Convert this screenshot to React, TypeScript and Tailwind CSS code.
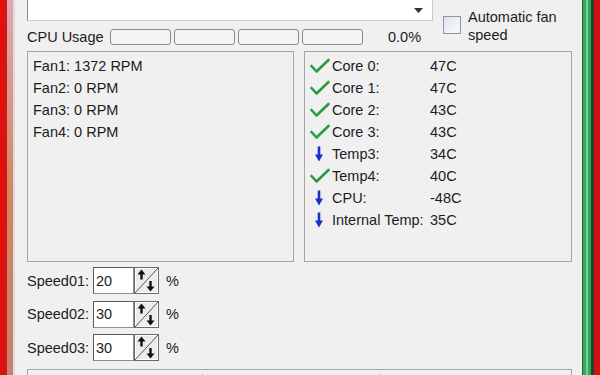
import React from "react";

const font = { fontFamily: '"Liberation Sans", Arial, sans-serif' };

function Check() {
  return (
    <svg width="20" height="16" viewBox="0 0 20 16" className="shrink-0">
      <path d="M1.5 8 L6.5 13.5 L18.5 2" stroke="#2b9a45" strokeWidth="2.6" fill="none" strokeLinecap="round" strokeLinejoin="round" />
    </svg>
  );
}

function Down() {
  return (
    <svg width="20" height="16" viewBox="0 0 20 16" className="shrink-0">
      <path d="M9 0.5 V11" stroke="#1830c8" strokeWidth="2.6" />
      <path d="M5 8.5 L9 15.5 L13 8.5 Z" fill="#1830c8" />
    </svg>
  );
}

function Spinner() {
  return (
    <svg width="25" height="27" viewBox="0 0 25 27" className="shrink-0">
      <rect x="0.5" y="0.5" width="24" height="26" fill="#ececec" stroke="#6a6a6a" />
      <rect x="1.5" y="1.5" width="22" height="24" fill="none" stroke="#ffffff" />
      <path d="M1 26 L24 1" stroke="#555" strokeWidth="1" />
      <path d="M7.5 2.5 L3.5 7.5 H11.5 Z" fill="#111" />
      <path d="M7.5 6 V12.5" stroke="#111" strokeWidth="2.4" />
      <path d="M16.5 24.5 L12.5 19.5 H20.5 Z" fill="#111" />
      <path d="M16.5 14 V21" stroke="#111" strokeWidth="2.4" />
    </svg>
  );
}

function SpeedRow({ label, value }: { label: string; value: string }) {
  return (
    <div className="flex items-center h-[27px]">
      <span className="w-[66px]">{label}</span>
      <div className="w-[41px] h-[27px] bg-white border border-[#8c8c8c] border-t-[#5a5a5a] border-l-[#5a5a5a] flex items-center pl-[2px]">
        {value}
      </div>
      <Spinner />
      <span className="ml-[7px]">%</span>
    </div>
  );
}

const temps: [string, string, boolean][] = [
  ["Core 0:", "47C", true],
  ["Core 1:", "47C", true],
  ["Core 2:", "43C", true],
  ["Core 3:", "43C", true],
  ["Temp3:", "34C", false],
  ["Temp4:", "40C", true],
  ["CPU:", "-48C", false],
  ["Internal Temp:", "35C", false],
];

export default function App() {
  return (
    <div className="w-[600px] h-[375px] overflow-hidden flex text-[14.5px] text-[#1c1c1c] bg-[#f0f0f0]" style={font}>
      {/* left window frame */}
      <div className="flex h-full shrink-0">
        <div className="w-[5px] bg-[#e40f0c]" />
        <div className="w-[2px] bg-[#b82418]" />
        <div className="w-[6px] bg-gradient-to-b from-[#e4a6b4] via-[#d8845e] to-[#c9806e]" />
        <div className="w-[2px] bg-[#dcdcdc]" />
      </div>

      {/* main */}
      <div className="flex-1 flex flex-col pl-[12px] pr-[10px] leading-[22px]">
        <div className="flex h-[51px] shrink-0">
          <div className="w-[406px] flex flex-col">
            <div className="h-[21px] bg-white border-l border-r border-b border-l-[#8a8a8a] border-r-[#c8c8c8] border-b-[#d0d0d0] flex justify-end items-center pr-[9px]">
              <svg width="9" height="5" viewBox="0 0 9 5"><path d="M0 0 H9 L4.5 5 Z" fill="#333" /></svg>
            </div>
            <div className="flex items-center mt-[8px] h-[16px]">
              <span className="w-[83px] whitespace-nowrap">CPU Usage</span>
              <div className="flex gap-[3px]">
                {[0, 1, 2, 3].map((i) => (
                  <div key={i} className="w-[61px] h-[16px] rounded-[3px] border border-[#8a8a8a] bg-[#f4f4f4]" />
                ))}
              </div>
              <span className="ml-[25px]">0.0%</span>
            </div>
          </div>
          <div className="flex items-start ml-[10px]">
            <div className="mt-[16px] w-[18px] h-[18px] border border-[#8a94a2] bg-gradient-to-br from-[#dfe3e8] to-[#fbfbfb] shrink-0" />
            <div className="ml-[7px] mt-[8px] leading-[18px]">
              Automatic fan
              <br />
              speed
            </div>
          </div>
        </div>

        <div className="flex gap-[10px] h-[211px] shrink-0">
          <div className="w-[267px] border border-[#a6a6a6] pl-[5px] pt-[3px]">
            <div>Fan1: 1372 RPM</div>
            <div>Fan2: 0 RPM</div>
            <div>Fan3: 0 RPM</div>
            <div>Fan4: 0 RPM</div>
          </div>
          <div className="w-[268px] border border-[#a6a6a6] pl-[5px] pt-[3px]">
            {temps.map(([n, v, ok]) => (
              <div key={n} className="flex items-center h-[22px]">
                {ok ? <Check /> : <Down />}
                <span className="ml-[2px] w-[98px] whitespace-nowrap">{n}</span>
                <span>{v}</span>
              </div>
            ))}
          </div>
        </div>

        <div className="flex flex-col gap-[6.5px] mt-[5px]">
          <SpeedRow label="Speed01:" value="20" />
          <SpeedRow label="Speed02:" value="30" />
          <SpeedRow label="Speed03:" value="30" />
        </div>

        <div className="mt-[8px] h-[40px] border border-[#a6a6a6] flex pt-[4px] shrink-0">
          <div className="w-[175px] border-r border-[#b0b0b0]" />
          <div className="w-[178px] border-r border-[#b0b0b0]" />
        </div>
      </div>

      {/* right window frame */}
      <div className="flex h-full shrink-0">
        <div className="w-[1px] bg-[#2c5a3c]" />
        <div className="w-[3px] bg-[#3aa862]" />
        <div className="w-[2px] bg-[#74d494]" />
        <div className="w-[3px] bg-[#33a45a]" />
        <div className="w-[3px] bg-[#1b4428]" />
        <div className="w-[6px] bg-[#d3120f]" />
      </div>
    </div>
  );
}
